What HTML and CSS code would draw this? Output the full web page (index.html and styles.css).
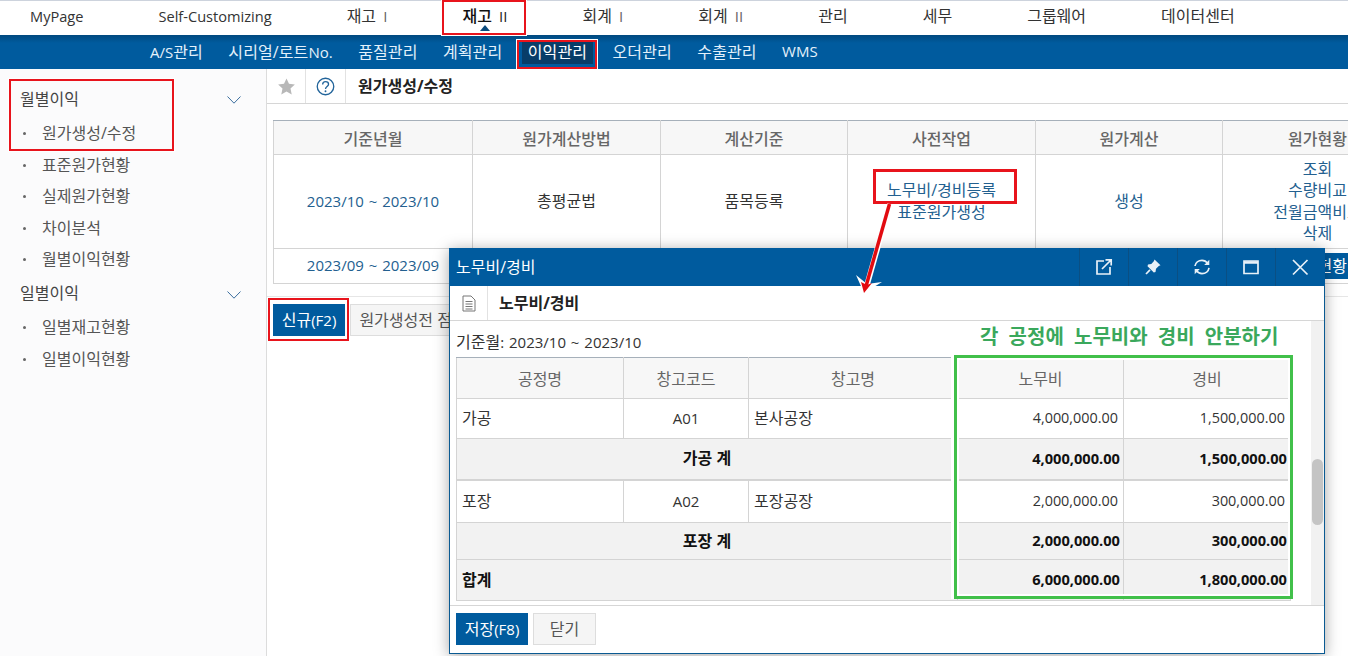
FILE: index.html
```html
<!DOCTYPE html>
<html lang="ko">
<head>
<meta charset="utf-8">
<title>원가생성/수정</title>
<link rel="stylesheet" href="styles.css">
</head>
<body>
<div class="page">
  <nav class="topnav">
    <a class="lat">MyPage</a><a class="lat">Self-Customizing</a><a>재고 <span class="rom">I</span></a><a class="on">재고 <span class="rom">II</span></a><a>회계 <span class="rom">I</span></a><a>회계 <span class="rom">II</span></a><a>관리</a><a>세무</a><a>그룹웨어</a><a>데이터센터</a>
  </nav>
  <nav class="subnav">
    <a><span class="lat">A/S</span>관리</a><a>시리얼/로트<span class="lat">No.</span></a><a>품질관리</a><a>계획관리</a><a class="on">이익관리</a><a>오더관리</a><a>수출관리</a><a class="lat">WMS</a>
  </nav>
  <div class="layout">
    <aside class="side">
      <div class="group first">월별이익<svg class="chev" viewBox="0 0 14 8"><path d="M.5.5 7 7.2 13.500.5"/></svg></div>
      <a class="item">원가생성/수정</a>
      <a class="item">표준원가현황</a>
      <a class="item">실제원가현황</a>
      <a class="item">차이분석</a>
      <a class="item">월별이익현황</a>
      <div class="group second">일별이익<svg class="chev" viewBox="0 0 14 8"><path d="M.5.5 7 7.2 13.500.5"/></svg></div>
      <a class="item">일별재고현황</a>
      <a class="item">일별이익현황</a>
    </aside>
    <main class="main">
      <header class="head">
        <span class="cell star"><svg viewBox="0 0 20 20" width="19" height="19"><path d="M10 1.500 12.600 7.200 18.800 7.900 14.200 12.100 15.500 18.300 10 15.200 4.500 18.300 5.800 12.100 1.200 7.900 7.400 7.200Z"/></svg></span>
        <span class="cell help"><svg viewBox="0 0 20 20" width="19" height="19"><circle cx="10" cy="10" r="8.700"/><path d="M7 8c0-2 1.300-3.200 3.100-3.200S13.200 5.900 13.200 7.600c0 2.300-3.200 2.500-3.200 5"/><circle class="dot" cx="10" cy="15" r="1"/></svg></span>
        <h1>원가생성/수정</h1>
      </header>
      <div class="tablewrap">
        <table class="list">
          <colgroup><col class="c1"><col class="c2"><col class="c3"><col class="c4"><col class="c5"><col class="c6"></colgroup>
          <tr class="hd"><th>기준년월</th><th>원가계산방법</th><th>계산기준</th><th>사전작업</th><th>원가계산</th><th>원가현황</th></tr>
          <tr class="r1">
            <td class="link date">2023/10 ~ 2023/10</td><td>총평균법</td><td>품목등록</td>
            <td class="link tight">노무비/경비등록<br>표준원가생성</td><td class="link">생성</td>
            <td class="link tight">조회<br>수량비교<br>전월금액비교<br>삭제</td>
          </tr>
          <tr class="r2">
            <td class="link date">2023/09 ~ 2023/09</td><td>총평균법</td><td>품목등록</td>
            <td class="link">노무비/경비등록</td><td class="link">조회</td>
            <td><span class="mini">원가현황</span></td>
          </tr>
        </table>
      </div>
      <div class="actions">
        <button class="btn primary">신규<span class="lat">(F2)</span></button>
        <button class="btn plain">원가생성전 점검</button>
      </div>
    </main>
  </div>

  <section class="modal">
    <div class="mtitle">
      <span>노무비/경비</span>
      <div class="tools">
        <i><svg viewBox="0 0 18 18"><path d="M9 3H2v13h13V9"/><path d="M7 11 16 2M10.500 1.800H16.200V7.500"/></svg></i>
        <i><svg viewBox="0 0 18 18"><path class="fill" d="M10.500 1.500 16.500 7.300 14.800 8 12 10.800 11.500 14 9.800 14.500 3.500 8.300 4 6.500 7.300 6 9.800 3.300Z"/><path d="M6 11.800 2 16"/></svg></i>
        <i><svg viewBox="0 0 18 18"><path d="M2 8C2.500 4.500 5.500 2.300 9 2.300c2.500 0 4.300 1.100 5.700 3"/><path d="M16 9.800c-.5 3.500-3.500 5.800-7 5.800-2.500 0-4.300-1.100-5.700-3"/><path class="fill" d="M16.300 1.800V7H11.200ZM1.700 16.200V11H6.800Z"/></svg></i>
        <i><svg viewBox="0 0 18 18"><path d="M2 3h14v12.500H2Z"/><path class="thick" d="M2 4.500h14"/></svg></i>
        <i><svg viewBox="0 0 18 18"><path d="M2 2 16.500 16.500M16.500 2 2 16.500"/></svg></i>
      </div>
    </div>
    <div class="msub">
      <span class="doc"><svg viewBox="0 0 14 17" width="14" height="17"><path d="M1 1h8l4 4v11H1Z"/><path d="M3.500 6.500h7M3.500 9h7M3.500 11.500h7M3.500 14h7"/></svg></span>
      <h2>노무비/경비</h2>
    </div>
    <div class="mbody">
      <div class="mcontent">
        <p class="month">기준월<span class="date">: 2023/10 ~ 2023/10</span></p>
        <table class="grid">
          <colgroup><col class="g1"><col class="g2"><col class="g3"><col class="g4"><col class="g5"></colgroup>
          <tr class="h41"><th>공정명</th><th>창고코드</th><th>창고명</th><th>노무비</th><th>경비</th></tr>
          <tr class="h40"><td>가공</td><td class="ctr date">A01</td><td>본사공장</td><td class="num">4,000,000.00</td><td class="num">1,500,000.00</td></tr>
          <tr class="h41 sum thick"><td colspan="3" class="ctr">가공 계</td><td class="num">4,000,000.00</td><td class="num">1,500,000.00</td></tr>
          <tr class="h43"><td>포장</td><td class="ctr date">A02</td><td>포장공장</td><td class="num">2,000,000.00</td><td class="num">300,000.00</td></tr>
          <tr class="h37 sum"><td colspan="3" class="ctr">포장 계</td><td class="num">2,000,000.00</td><td class="num">300,000.00</td></tr>
          <tr class="h41 sum"><td colspan="3">합계</td><td class="num">6,000,000.00</td><td class="num">1,800,000.00</td></tr>
        </table>
      </div>
      <div class="track"><div class="thumb"></div></div>
    </div>
    <div class="mfoot">
      <button class="btn primary save">저장<span class="lat">(F8)</span></button>
      <button class="btn plain close">닫기</button>
    </div>
  </section>

  <div class="mark m1"></div>
  <div class="mark m2"></div>
  <div class="mark m3"></div>
  <div class="mark m4"></div>
  <div class="mark m5"></div>
  <div class="gmark"></div>
  <p class="gnote">각 공정에 노무비와 경비 안분하기</p>
  <svg class="arrow" viewBox="0 0 50 100" width="50" height="100">
    <path class="halo" d="M40 3 17 84"/>
    <path class="halo2" d="M6 74 14 92 32 81 17 83Z"/>
    <path class="line" d="M39.500 3 15.500 87"/>
    <path class="head" d="M14 92 11 81 17 84 22 82Z"/>
  </svg>
</div>
</body>
</html>
```
FILE: styles.css
```css
* { box-sizing: border-box; }
html, body { margin: 0; height: 100%; overflow: hidden; }
body { background: #fff; color: #333; font: 16px/1.3 "Open Sans", "Noto Sans CJK KR", sans-serif; }
.page { position: relative; width: 1348px; height: 656px; overflow: hidden; display: flex; flex-direction: column; }
.lat { font-size: 14.600px; }
.date { font-size: 15px; word-spacing: 1px; }
.rom { font-size: 15px; margin-left: 3px; color: #666; font-weight: 400; }

.topnav { height: 35px; flex: none; display: flex; gap: 75px; align-items: center; padding: 0 0 4px 30px; border-top: 1px solid #cdd3dd; background: #fff; }
.topnav a { color: #333; white-space: nowrap; }
.topnav .on { position: relative; color: #111; font-weight: 500; }
.topnav .on .rom { color: #222; font-weight: 500; }
.topnav .on::after { content: ""; position: absolute; left: 50%; top: 19px; margin-left: -5px; border: 5px solid transparent; border-top: 0; border-bottom: 6px solid #0b4a7c; }

.subnav { height: 34px; flex: none; display: flex; gap: 25.500px; align-items: center; padding-left: 150px; letter-spacing: .1px; background: linear-gradient(#00497f, #005b9e 8px); }
.subnav a { color: #e4f1fb; white-space: nowrap; position: relative; }
.subnav .lat { font-size: 15px; letter-spacing: 0; }
.subnav .on { color: #fff; background: #083d68; padding: 0 6px; margin: 0 -6px; line-height: 24px; }

.layout { flex: 1; display: flex; min-height: 0; }
.side { width: 267px; flex: none; background: #fbfbfc; border-right: 1px solid #dcdcdc; padding: 13px 0 0 0; }
.group { position: relative; height: 34px; line-height: 34px; padding-left: 20px; color: #444; }
.group.first { height: 36px; }
.group.second { height: 35px; line-height: 33px; margin-top: 1px; }
.chev { position: absolute; left: 227px; top: 14px; width: 14px; height: 8px; fill: none; stroke: #3a6e9e; stroke-width: 1; }
.item { display: block; position: relative; height: 31.600px; line-height: 31.600px; padding-left: 42px; color: #555; }
.item::before { content: ""; position: absolute; left: 23px; top: 14px; width: 3px; height: 3px; border-radius: 50%; background: #666; }

.main { flex: 1; min-width: 0; }
.head { height: 35px; display: flex; align-items: stretch; border-bottom: 1px solid #d6d6d6; }
.cell { display: flex; align-items: center; justify-content: center; border-right: 1px solid #e2e2e2; }
.star { width: 39px; }
.star path { fill: #b8b8b8; }
.help { width: 40px; }
.help svg { fill: none; stroke: #22649a; stroke-width: 1.400; }
.help .dot { fill: #22649a; stroke: none; }
.head h1 { margin: 0 0 0 12px; font-size: 16px; font-weight: 700; line-height: 34px; color: #222; }

.tablewrap { margin: 16px 0 0 6px; height: 176px; overflow: hidden; }
.list { table-layout: fixed; border-collapse: collapse; width: 1139px; text-align: center; }
.c1 { width: 199px; } .c2 { width: 188px; } .c3 { width: 187px; } .c4 { width: 188px; } .c5 { width: 187px; } .c6 { width: 190px; }
.list th, .list td { border: 1px solid #d4d4d4; padding: 0; font-weight: 400; }
.list th { height: 34px; padding-top: 3px; background: #f7f7f7; color: #666; font-weight: 500; border-top-color: #a6b0ba; }
.r1 td { height: 94px; color: #333; }
.r2 td { height: 35px; color: #333; }
.list .link { color: #23608f; }
.list .tight { line-height: 21.500px; }
.mini { display: inline-block; background: #005b9e; color: #fff; padding: 0 8px; line-height: 26px; white-space: nowrap; }

.actions { display: flex; gap: 5px; padding: 7px 0 0 6px; border-top: 1px solid #e6e6e6; }
.btn { height: 32px; border: 1px solid #ddd; padding: 0; font: inherit; color: #555; background: #f5f5f5; white-space: nowrap; }
.btn .lat { font-size: 15px; }
.btn.primary { width: 72px; background: #005b9e; border-color: #005b9e; color: #fff; }
.btn.plain { width: 126px; }

.modal { position: absolute; left: 449px; top: 248px; width: 876px; height: 406px; background: #fff; border: 1px solid #0a5a92; border-top: 0; box-shadow: 0 2px 14px rgba(0,0,0,.35); display: flex; flex-direction: column; }
.mtitle { height: 38px; margin: 0 -1px; flex: none; background: #005b9e; color: #fff; display: flex; align-items: center; justify-content: space-between; padding: 0 1px 0 7px; }
.tools { display: flex; height: 100%; }
.tools i { width: 49px; display: flex; align-items: center; justify-content: center; border-left: 1px solid #0a4f83; }
.tools svg { width: 18px; height: 18px; fill: none; stroke: #e8f1f8; stroke-width: 1.700; }
.tools .fill { fill: #e8f1f8; stroke: none; }
.tools .thick { stroke-width: 2.500; }
.msub { height: 35px; flex: none; display: flex; border-bottom: 1px solid #d6d6d6; }
.doc { width: 38px; display: flex; align-items: center; justify-content: center; border-right: 1px solid #e2e2e2; }
.doc svg { fill: none; stroke: #777; stroke-width: 1; }
.msub h2 { margin: 0 0 0 11px; font-size: 16px; font-weight: 700; line-height: 34px; color: #222; }

.mbody { height: 285px; flex: none; display: flex; border-bottom: 1px solid #d6d6d6; }
.mcontent { flex: 1; min-width: 0; padding: 10px 0 0 6px; }
.month { margin: 0; height: 26px; line-height: 22px; color: #333; }
.grid { table-layout: fixed; border-collapse: collapse; width: 834px; }
.g1 { width: 167px; } .g2 { width: 125px; } .g3 { width: 209px; } .g4 { width: 166px; } .g5 { width: 167px; }
.grid th, .grid td { border: 1px solid #d4d4d4; padding: 0 5px; }
.grid th { padding-top: 2px; background: #f7f7f7; color: #666; font-weight: 400; border-top-color: #a6b0ba; }
.grid .ctr { text-align: center; }
.grid .num { text-align: right; font-size: 14.400px; }
.grid .sum td { background: #f2f2f2; font-weight: 700; color: #111; }
.grid .sum .num { font-size: 14.650px; padding-right: 3px; }
.grid .thick td { border-bottom-width: 2px; }
.h37 { height: 37px; } .h40 { height: 40px; } .h41 { height: 41px; } .h43 { height: 43px; }
.track { width: 13px; flex: none; background: #f1f1f1; padding-top: 138px; }
.thumb { width: 11px; height: 66px; margin-left: 1px; border-radius: 6px; background: #c4c4c4; }
.mfoot { flex: 1; display: flex; gap: 5px; padding: 7px 0 0 6px; }
.save { width: 71px; height: 32px; }
.btn.close { width: 63px; height: 32px; }

.mark { position: absolute; border: 2px solid #e8141c; box-shadow: 0 0 0 1px #fff; }
.m1 { left: 442px; top: 0; width: 84px; height: 35px; }
.m2 { left: 517px; top: 40px; width: 80px; height: 29px; }
.m3 { left: 9px; top: 79px; width: 165px; height: 72px; }
.m4 { left: 873px; top: 169px; width: 144px; height: 35px; border-width: 3px; }
.m5 { left: 268px; top: 298px; width: 81px; height: 43px; }
.gmark { position: absolute; left: 954px; top: 355px; width: 339px; height: 244px; border: 3px solid #41c04a; box-shadow: -3px 0 0 #fff, inset 0 0 0 2px #fff; }
.gnote { position: absolute; left: 980px; top: 325px; margin: 0; font-size: 20px; line-height: 24px; font-weight: 700; word-spacing: 5px; color: #3aa85c; white-space: nowrap; }
.arrow { position: absolute; left: 850px; top: 201px; fill: none; }
.arrow .line { stroke: #e20a10; stroke-width: 3.500; }
.arrow .halo { stroke: #fff; stroke-width: 5.500; }
.arrow .halo2 { fill: #fff; }
.arrow .head { fill: #e20a10; }
```
